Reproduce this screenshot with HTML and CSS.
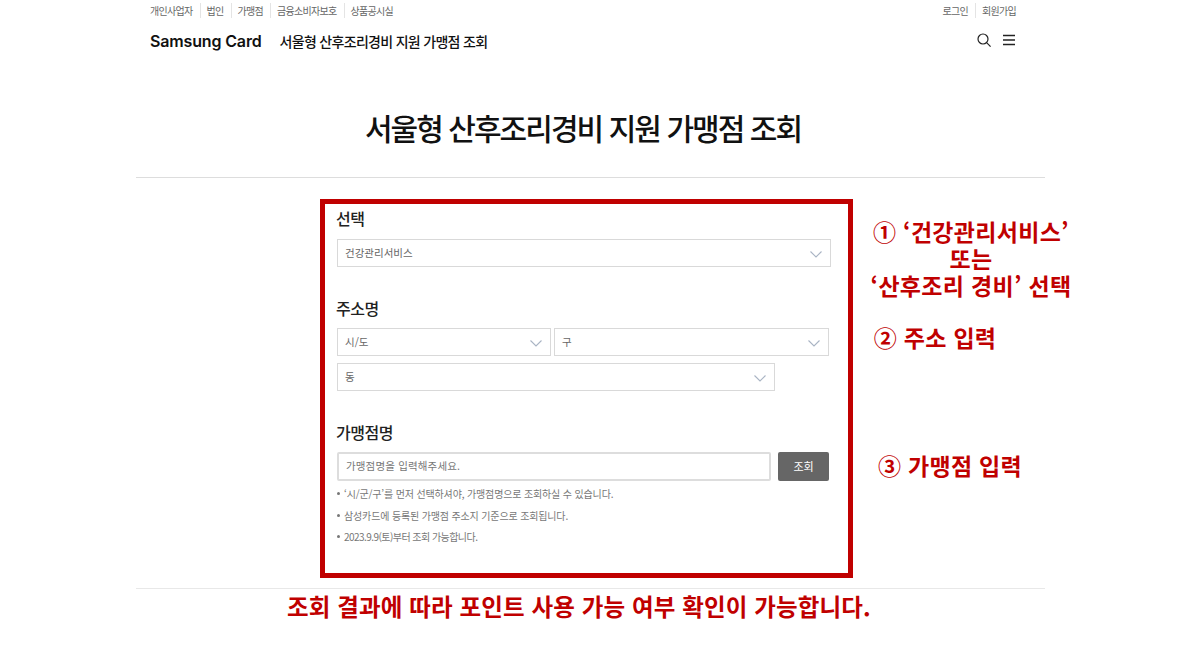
FILE: index.html
```html
<!DOCTYPE html>
<html lang="ko">
<head>
  <meta charset="UTF-8" />
  <title>서울형 산후조리경비 지원 가맹점 조회</title>
  <link rel="stylesheet" href="styles.css">
</head>
<body>
  <div class="page">
    <div class="topbar">
      <ul class="topbar-links">
        <li>개인사업자</li>
        <li>법인</li>
        <li>가맹점</li>
        <li>금융소비자보호</li>
        <li>상품공시실</li>
      </ul>
      <ul class="topbar-links">
        <li>로그인</li>
        <li>회원가입</li>
      </ul>
    </div>

    <header class="header">
      <span class="logo">Samsung Card</span>
      <span class="header-title">서울형 산후조리경비 지원 가맹점 조회</span>
      <div class="header-icons">
        <svg width="14" height="14" viewBox="0 0 14 14" fill="none" stroke="#222" stroke-width="1.2">
          <circle cx="6" cy="6" r="5" />
          <path d="M9.600 9.600 13.600 13.600" />
        </svg>
        <svg width="12" height="12" viewBox="0 0 12 12" fill="none" stroke="#222" stroke-width="1.4">
          <path d="M0 1.500h12M0 6h12M0 10.500h12" />
        </svg>
      </div>
    </header>

    <h1 class="page-title">서울형 산후조리경비 지원 가맹점 조회</h1>

    <div class="content">
      <form class="search-box">
        <h2 class="field-title first">선택</h2>
        <div class="select">
          <span>건강관리서비스</span>
          <svg class="chevron" viewBox="0 0 12 7"><path d="M.5.5 6 6 11.500.5" /></svg>
        </div>

        <h2 class="field-title">주소명</h2>
        <div class="select-row">
          <div class="select sido">
            <span>시/도</span>
            <svg class="chevron" viewBox="0 0 12 7"><path d="M.5.5 6 6 11.500.5" /></svg>
          </div>
          <div class="select gu">
            <span>구</span>
            <svg class="chevron" viewBox="0 0 12 7"><path d="M.5.5 6 6 11.500.5" /></svg>
          </div>
        </div>
        <div class="select dong">
          <span>동</span>
          <svg class="chevron" viewBox="0 0 12 7"><path d="M.5.5 6 6 11.500.5" /></svg>
        </div>

        <h2 class="field-title">가맹점명</h2>
        <div class="search-row">
          <div class="text-input">가맹점명을 입력해주세요.</div>
          <button type="button" class="search-btn">조회</button>
        </div>
        <ul class="notes">
          <li>‘시/군/구’를 먼저 선택하셔야, 가맹점명으로 조회하실 수 있습니다.</li>
          <li>삼성카드에 등록된 가맹점 주소지 기준으로 조회됩니다.</li>
          <li>2023.9.9(토)부터 조회 가능합니다.</li>
        </ul>
      </form>

      <div class="guide">
        <p class="guide-one">① ‘건강관리서비스’<br>또는<br>‘산후조리 경비’ 선택</p>
        <p class="guide-two">② 주소 입력</p>
        <p class="guide-three">③ 가맹점 입력</p>
      </div>
    </div>

    <p class="result-note">조회 결과에 따라 포인트 사용 가능 여부 확인이 가능합니다.</p>
  </div>
</body>
</html>
```

FILE: styles.css
```css
* {
  box-sizing: border-box;
}

body {
  font-family: "Noto Sans CJK KR", "Noto Sans", sans-serif;
  background-color: #fff;
  color: #222;
  margin: 0;
}

ul {
  list-style: none;
  margin: 0;
  padding: 0;
}

.page {
  width: 909px;
  margin: 0 auto;
}

.topbar {
  display: flex;
  justify-content: space-between;
  height: 21px;
  padding: 0 29px 0 14px;
  align-items: center;
}

.topbar-links {
  display: flex;
  font-size: 10px;
  letter-spacing: -0.7px;
  color: #666;
}

.topbar-links li + li {
  margin-left: 7px;
  padding-left: 6px;
  border-left: 1px solid #e4e4e4;
}

.header {
  display: flex;
  align-items: center;
  height: 40px;
  padding: 0 30px 0 14px;
}

.logo {
  font-family: "Inter", sans-serif;
  font-size: 16px;
  font-weight: 600;
  letter-spacing: -0.15px;
  color: #111;
}

.header-title {
  margin-left: 18px;
  font-size: 14px;
  font-weight: 500;
  letter-spacing: -0.7px;
  color: #111;
}

.header-icons {
  margin: 0 0 2px auto;
  display: flex;
  align-items: center;
  gap: 12px;
}

.page-title {
  margin: 0;
  height: 117px;
  padding: 41px 15px 0 0;
  border-bottom: 1px solid #ddd;
  text-align: center;
  font-size: 30px;
  line-height: 50px;
  font-weight: 500;
  letter-spacing: -1.95px;
  color: #111;
}

.content {
  display: flex;
  padding: 21px 0 10px 184px;
  border-bottom: 1px solid #e8e8e8;
}

.search-box {
  flex-shrink: 0;
  width: 533px;
  height: 379px;
  border: 5px solid #c00000;
  padding: 0 12px;
}

.field-title {
  margin: 29px 0 8px -1px;
  font-size: 16px;
  line-height: 24px;
  font-weight: 500;
  letter-spacing: -0.5px;
  color: #222;
}

.field-title.first {
  margin-top: 2px;
  margin-bottom: 9px;
}

.select {
  display: flex;
  align-items: center;
  justify-content: space-between;
  width: 494px;
  height: 28px;
  padding: 0 8px 0 7px;
  border: 1px solid #d9d9d9;
  font-size: 10.5px;
  color: #666;
}

.select span {
  position: relative;
  top: -1px;
}

.chevron {
  width: 12px;
  height: 7px;
  margin-top: 3px;
  fill: none;
  stroke: #a9b4c4;
  stroke-width: 1.1;
}

.select-row {
  display: flex;
  gap: 3px;
}

.sido {
  width: 214px;
}

.gu {
  width: 275px;
}

.dong {
  width: 438px;
  margin-top: 7px;
}

.search-row {
  display: flex;
  gap: 7px;
  width: 492px;
}

.text-input {
  width: 435px;
  height: 29px;
  padding: 0 7px;
  border: 2px solid #ddd;
  border-radius: 2px;
  font-size: 10.5px;
  letter-spacing: 0.15px;
  line-height: 23px;
  color: #777;
}

.search-btn {
  width: 51px;
  height: 29px;
  padding: 0 0 2px;
  border: none;
  border-radius: 2px;
  background-color: #666;
  color: #fff;
  font-family: inherit;
  font-size: 11px;
}

.notes {
  margin-top: 2px;
  font-size: 10px;
  letter-spacing: -0.15px;
  color: #777;
}

.notes li {
  height: 21.5px;
  line-height: 21.500px;
  padding-left: 7px;
  position: relative;
}

.notes li:last-child {
  letter-spacing: -0.55px;
}

.notes li::before {
  content: "";
  position: absolute;
  left: 0;
  top: 9px;
  width: 3px;
  height: 3px;
  border-radius: 50%;
  background-color: #777;
}

.guide {
  flex-shrink: 0;
  width: 222px;
  margin-left: 7px;
  color: #c00000;
  font-size: 23px;
  font-weight: 700;
  letter-spacing: 0.3px;
  line-height: 27px;
  text-align: center;
  white-space: nowrap;
}

.guide p {
  margin: 0;
}

.guide-one {
  padding-top: 19px;
}

.guide-two {
  padding: 25px 72px 0 0;
}

.guide-three {
  padding: 101px 42px 0 0;
}

.result-note {
  margin: 2px 0 0 151px;
  color: #c00000;
  font-size: 23.5px;
  letter-spacing: 0.14px;
  line-height: 30px;
  font-weight: 700;
}
```
